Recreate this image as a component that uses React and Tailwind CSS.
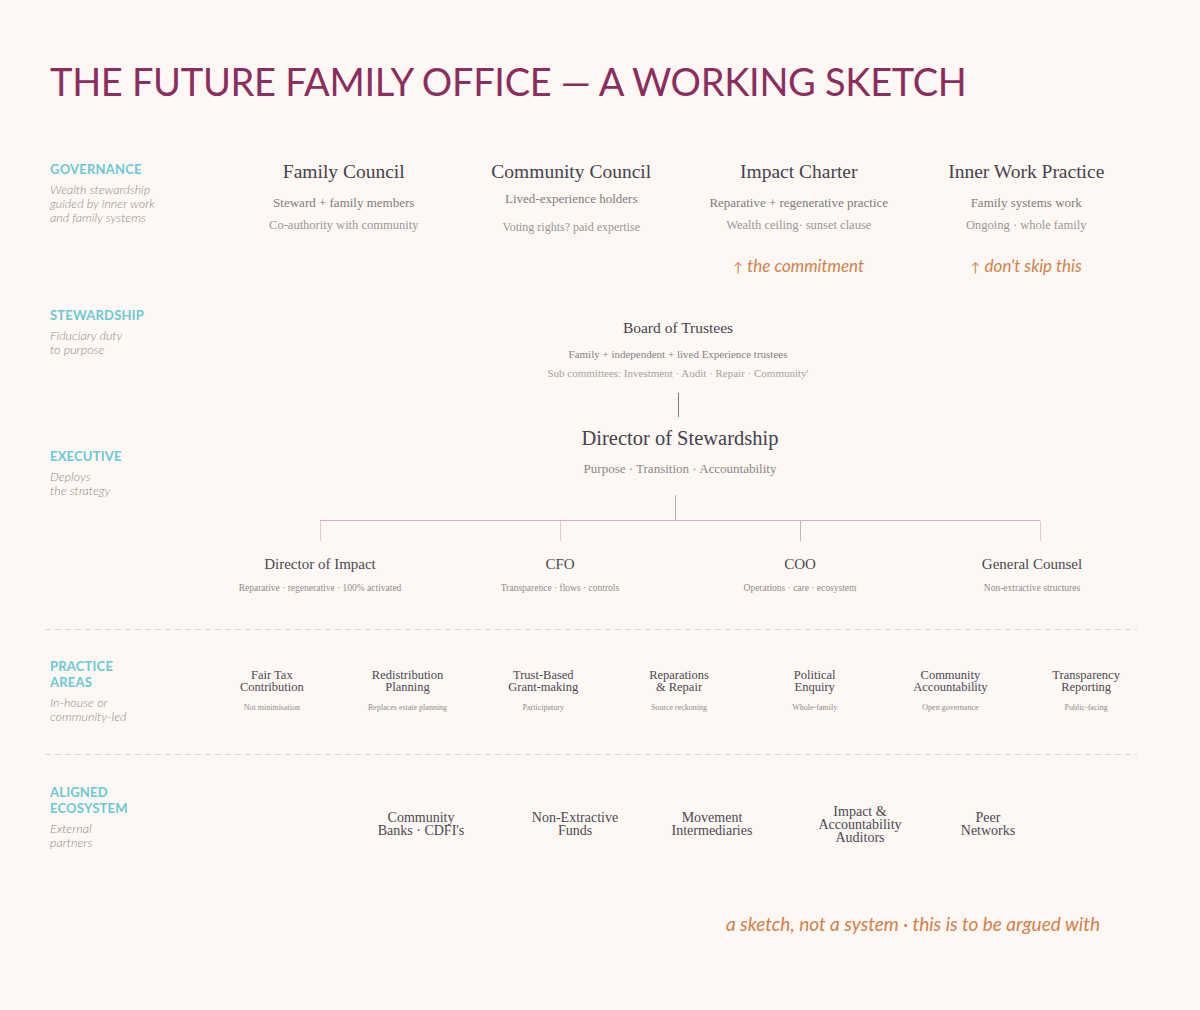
import React from "react";

const serif = "font-['Liberation_Serif',serif]";
const sans = "font-['Lato',sans-serif]";

const governance = [
  { title: "Family Council", lines: ["Steward + family members", "Co-authority with community"] },
  { title: "Community Council", lines: ["Lived-experience holders", "Voting rights?  paid expertise"], soft: true },
  { title: "Impact Charter", lines: ["Reparative + regenerative practice", "Wealth ceiling· sunset clause"], note: "the commitment" },
  { title: "Inner Work Practice", lines: ["Family systems work", "Ongoing · whole family"], note: "don't skip this" },
];

const executives = [
  { title: "Director of Impact", sub: "Reparative · regenerative · 100% activated" },
  { title: "CFO", sub: "Transparence · flows · controls" },
  { title: "COO", sub: "Operations · care · ecosystem" },
  { title: "General Counsel", sub: "Non-extractive structures" },
];

const practices = [
  { title: ["Fair Tax", "Contribution"], sub: "Not minimisation" },
  { title: ["Redistribution", "Planning"], sub: "Replaces estate planning" },
  { title: ["Trust-Based", "Grant-making"], sub: "Participatory" },
  { title: ["Reparations", "& Repair"], sub: "Source reckoning" },
  { title: ["Political", "Enquiry"], sub: "Whole-family" },
  { title: ["Community", "Accountability"], sub: "Open governance" },
  { title: ["Transparency", "Reporting"], sub: "Public-facing" },
];

const ecosystem = [
  ["Community", "Banks · CDFI's"],
  ["Non-Extractive", "Funds"],
  ["Movement", "Intermediaries"],
  ["Impact &", "Accountability", "Auditors"],
  ["Peer", "Networks"],
];

function Label({ title, desc }) {
  return (
    <div className={sans}>
      {title.map((t) => (
        <div key={t} className="text-[13px] leading-[16px] font-bold text-[#6cc8d4] tracking-[0.2px]">
          {t}
        </div>
      ))}
      <div className="mt-[6px] text-[12.5px] leading-[14px] italic font-light text-[#8e8a89]">
        {desc.map((d) => (
          <div key={d}>{d}</div>
        ))}
      </div>
    </div>
  );
}

function Dashed() {
  return (
    <div className="ml-[45px] w-[1092px] h-px bg-[repeating-linear-gradient(to_right,#dcd7d3_0_6px,transparent_6px_10px)]" />
  );
}

export default function App() {
  return (
    <div className="w-[1200px] min-h-[1010px] bg-[#fdf8f3] pb-[60px]">
      {/* title */}
      <h1 className={`${sans} pl-[50px] pt-[60px] text-[38px] leading-[42px] text-[#8b2d5f] tracking-[-0.3px]`}>
        THE FUTURE FAMILY OFFICE — A WORKING SKETCH
      </h1>

      {/* governance */}
      <div className="flex pl-[50px] mt-[58px]">
        <div className="w-[150px] shrink-0 pt-[1px]">
          <Label title={["GOVERNANCE"]} desc={["Wealth stewardship", "guided by inner work", "and family systems"]} />
        </div>
        <div className="ml-[30px] w-[910px] grid grid-cols-4">
          {governance.map((g) => (
            <div key={g.title} className="flex flex-col items-center text-center">
              <div className={`${serif} text-[19.5px] leading-[24px] text-[#46424f]`}>{g.title}</div>
              <div className={`${serif} ${g.soft ? "mt-[4px]" : "mt-[8px]"} text-[13px] leading-[22px] text-[#7f7b80]`}>
                {g.lines[0]}
              </div>
              <div className={`${serif} ${g.soft ? "mt-[6px] text-[12px]" : "text-[12.5px]"} leading-[22px] text-[#9a9699]`}>
                {g.lines[1]}
              </div>
              {g.note && (
                <div className={`${sans} mt-[18px] text-[17px] leading-[24px] italic text-[#d2804d]`}>
                  <span className="not-italic text-[13px] mr-[4px]">↑</span>
                  {g.note}
                </div>
              )}
            </div>
          ))}
        </div>
      </div>

      {/* stewardship + executive */}
      <div className="flex pl-[50px] mt-[28px]">
        <div className="w-[150px] shrink-0">
          <Label title={["STEWARDSHIP"]} desc={["Fiduciary duty", "to purpose"]} />
          <div className="mt-[91px]">
            <Label title={["EXECUTIVE"]} desc={["Deploys", "the strategy"]} />
          </div>
        </div>
        <div className="w-[960px] flex flex-col items-center pt-[11px]">
          <div className="flex flex-col items-center ml-[-4px]">
            <div className={`${serif} text-[15.5px] leading-[20px] text-[#46424f]`}>Board of Trustees</div>
            <div className={`${serif} mt-[7px] text-[11px] leading-[19px] text-[#85818a]`}>
              Family + independent + lived Experience trustees
            </div>
            <div className={`${serif} text-[11px] leading-[19px] text-[#a4a0a3]`}>
              Sub committees: Investment · Audit · Repair · Community'
            </div>
            <div className="mt-[10px] w-px h-[24px] bg-[#7d7a80]" />
          </div>
          <div className={`${serif} mt-[8px] text-[20.5px] leading-[26px] text-[#46424f]`}>Director of Stewardship</div>
          <div className={`${serif} mt-[8px] text-[13px] leading-[20px] text-[#8a868b]`}>
            Purpose · Transition · Accountability
          </div>
          <div className="mt-[16px] w-px h-[25px] bg-[#b9b5b6] ml-[-10px]" />
          <div className="w-full">
            <div className="mx-[120px] h-px bg-[#d5aec3]" />
            <div className="grid grid-cols-4">
              {executives.map((e, i) => (
                <div key={e.title} className="flex flex-col items-center text-center">
                  <div className={`w-px h-[20px] ${i === 2 ? "bg-[#bdb9ba]" : "bg-[#e3c7d3]"}`} />
                  <div className={`flex flex-col items-center ${i === 3 ? "mr-[16px]" : ""}`}>
                    <div className={`${serif} mt-[14px] text-[15px] leading-[18px] text-[#4b4753]`}>{e.title}</div>
                    <div className={`${serif} mt-[8px] text-[9.5px] leading-[14px] text-[#8f8b8f]`}>{e.sub}</div>
                  </div>
                </div>
              ))}
            </div>
          </div>
        </div>
      </div>

      <div className="mt-[34px]">
        <Dashed />
      </div>

      {/* practice areas */}
      <div className="flex pl-[50px] mt-[28px]">
        <div className="w-[150px] shrink-0">
          <Label title={["PRACTICE", "AREAS"]} desc={["In-house or", "community-led"]} />
        </div>
        <div className="ml-[4px] w-[950px] grid grid-cols-7 mt-[11px]">
          {practices.map((p) => (
            <div key={p.sub} className="flex flex-col items-center text-center">
              <div className={`${serif} text-[12.5px] leading-[12px] text-[#4b4753]`}>
                {p.title.map((t) => (
                  <div key={t}>{t}</div>
                ))}
              </div>
              <div className={`${serif} mt-[10px] text-[8px] leading-[10px] text-[#8f8b8f]`}>{p.sub}</div>
            </div>
          ))}
        </div>
      </div>

      <div className="mt-[30px]">
        <Dashed />
      </div>

      {/* ecosystem */}
      <div className="flex pl-[50px] mt-[29px]">
        <div className="w-[150px] shrink-0">
          <Label title={["ALIGNED", "ECOSYSTEM"]} desc={["External", "partners"]} />
        </div>
        <div className="ml-[150px] grid grid-cols-[142px_166px_108px_188px_68px] h-[42px] mt-[19px] items-center">
          {ecosystem.map((lines) => (
            <div key={lines.join()} className={`${serif} text-center text-[14px] leading-[13px] text-[#4b4753] whitespace-nowrap`}>
              {lines.map((l) => (
                <div key={l}>{l}</div>
              ))}
            </div>
          ))}
        </div>
      </div>

      {/* footer note */}
      <div className="flex justify-end pr-[100px] mt-[62px]">
        <div className={`${sans} text-[19px] leading-[24px] italic text-[#d2804d]`}>
          a sketch, not a system · this is to be argued with
        </div>
      </div>
    </div>
  );
}
